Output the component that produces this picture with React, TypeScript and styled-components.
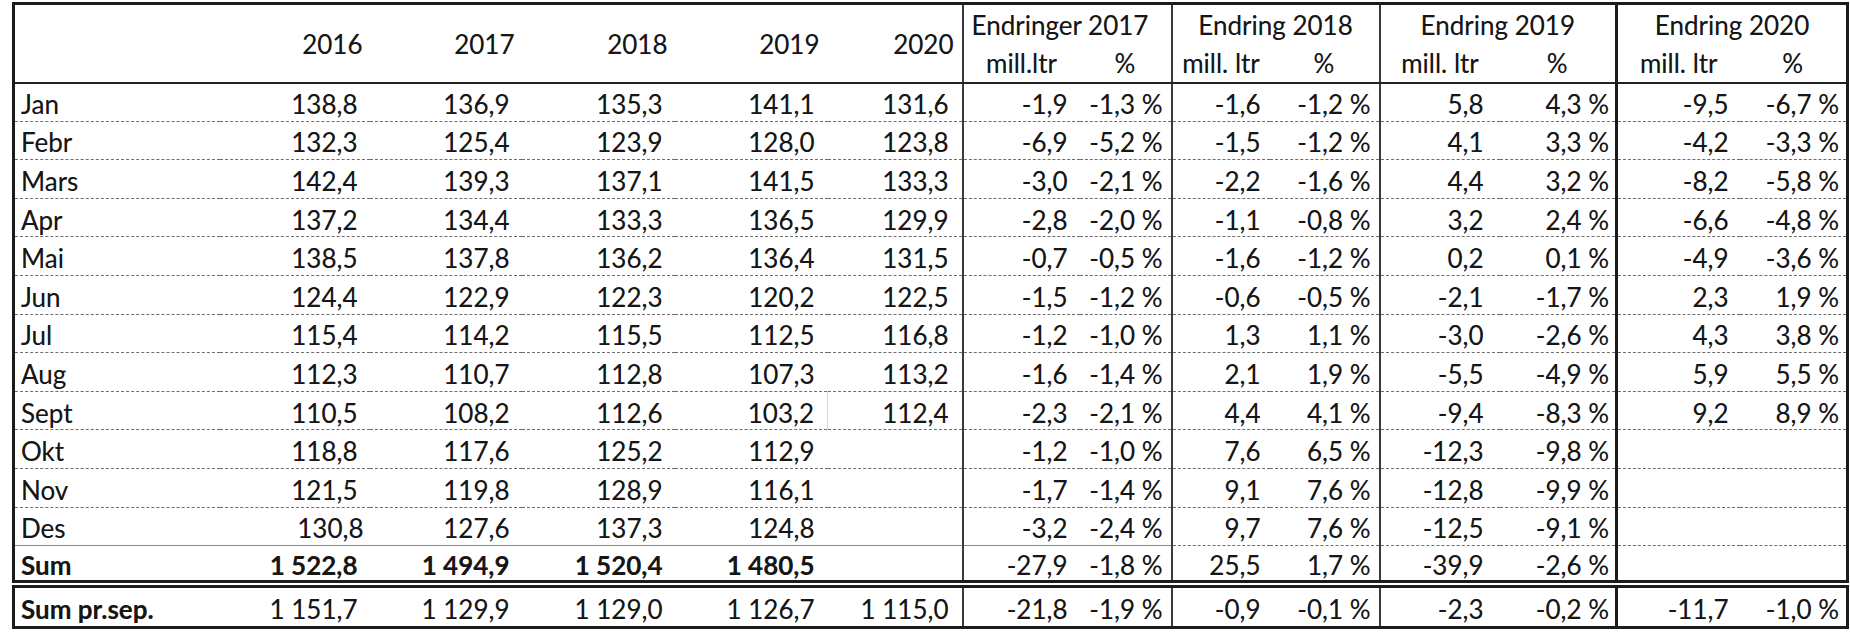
import styled, { createGlobalStyle } from "styled-components";

const GlobalStyle = createGlobalStyle`
  html, body {
    margin: 0;
    padding: 0;
    background: #ffffff;
  }
  body {
    font-family: Lato, "Open Sans", sans-serif;
    color: #161616;
  }
`;

const Sheet = styled.div`
  padding: 2px 0 0 12px;
`;

const Grid = styled.table`
  border-collapse: collapse;
  table-layout: fixed;
  width: 1836px;
  border: 3px solid #1b1b1b;
  font-size: 26px;
  line-height: 1;
  text-shadow: 0 0 0.5px rgba(0, 0, 0, 0.35);
`;

type Edge = "none" | "thin" | "thick";
type Under = "none" | "dash" | "solid" | "double" | "head";

const edgeCss = (e: Edge) =>
  e === "thin" ? "2px solid #3a3a3a" : e === "thick" ? "3px solid #1b1b1b" : "none";

const underCss = (u: Under) => {
  switch (u) {
    case "dash":
      return "1px dashed #6e6e6e";
    case "solid":
      return "1px solid #8a8a8a";
    case "double":
      return "8px double #1b1b1b";
    case "head":
      return "2px solid #222222";
    default:
      return "none";
  }
};

const Row = styled.tr<{ $h: number }>`
  height: ${(p) => p.$h}px;
`;

const HeadCell = styled.th<{ $align: string; $pr: number; $right: Edge; $under: Under }>`
  font-weight: 400;
  text-align: ${(p) => p.$align};
  padding: 2px ${(p) => p.$pr}px 0 0;
  vertical-align: middle;
  white-space: nowrap;
  border-right: ${(p) => edgeCss(p.$right)};
  border-bottom: ${(p) => underCss(p.$under)};
`;

const Cell = styled.td<{
  $pr: number;
  $bold?: boolean;
  $label?: boolean;
  $right: Edge;
  $under: Under;
  $ghost?: boolean;
}>`
  padding: 4px ${(p) => p.$pr}px 0 ${(p) => (p.$label ? 6 : 0)}px;
  text-align: ${(p) => (p.$label ? "left" : "right")};
  font-weight: ${(p) => (p.$bold ? 700 : 400)};
  vertical-align: middle;
  white-space: nowrap;
  overflow: visible;
  border-right: ${(p) => edgeCss(p.$right)};
  border-bottom: ${(p) => underCss(p.$under)};
  border-left: ${(p) => (p.$ghost ? "1px solid #d6d6d6" : "none")};
`;

const cols: { w: number; pr: number; edge: Edge }[] = [
  { w: 206, pr: 0, edge: "none" },
  { w: 150, pr: 12, edge: "none" },
  { w: 152, pr: 12, edge: "none" },
  { w: 153, pr: 12, edge: "none" },
  { w: 153, pr: 13, edge: "none" },
  { w: 135, pr: 13, edge: "thin" },
  { w: 117, pr: 12, edge: "none" },
  { w: 92, pr: 8, edge: "thin" },
  { w: 98, pr: 9, edge: "none" },
  { w: 110, pr: 8, edge: "thin" },
  { w: 120, pr: 16, edge: "none" },
  { w: 117, pr: 6, edge: "thick" },
  { w: 123, pr: 11, edge: "none" },
  { w: 108, pr: 7, edge: "none" },
];

const years = ["2016", "2017", "2018", "2019", "2020"];

const groups = [
  { title: "Endringer 2017", unit: "mill.ltr", shift: 14 },
  { title: "Endring 2018", unit: "mill. ltr", shift: 0 },
  { title: "Endring 2019", unit: "mill. ltr", shift: 0 },
  { title: "Endring 2020", unit: "mill. ltr", shift: 0 },
];

const rows: string[][] = [
  ["Jan", "138,8", "136,9", "135,3", "141,1", "131,6", "-1,9", "-1,3 %", "-1,6", "-1,2 %", "5,8", "4,3 %", "-9,5", "-6,7 %"],
  ["Febr", "132,3", "125,4", "123,9", "128,0", "123,8", "-6,9", "-5,2 %", "-1,5", "-1,2 %", "4,1", "3,3 %", "-4,2", "-3,3 %"],
  ["Mars", "142,4", "139,3", "137,1", "141,5", "133,3", "-3,0", "-2,1 %", "-2,2", "-1,6 %", "4,4", "3,2 %", "-8,2", "-5,8 %"],
  ["Apr", "137,2", "134,4", "133,3", "136,5", "129,9", "-2,8", "-2,0 %", "-1,1", "-0,8 %", "3,2", "2,4 %", "-6,6", "-4,8 %"],
  ["Mai", "138,5", "137,8", "136,2", "136,4", "131,5", "-0,7", "-0,5 %", "-1,6", "-1,2 %", "0,2", "0,1 %", "-4,9", "-3,6 %"],
  ["Jun", "124,4", "122,9", "122,3", "120,2", "122,5", "-1,5", "-1,2 %", "-0,6", "-0,5 %", "-2,1", "-1,7 %", "2,3", "1,9 %"],
  ["Jul", "115,4", "114,2", "115,5", "112,5", "116,8", "-1,2", "-1,0 %", "1,3", "1,1 %", "-3,0", "-2,6 %", "4,3", "3,8 %"],
  ["Aug", "112,3", "110,7", "112,8", "107,3", "113,2", "-1,6", "-1,4 %", "2,1", "1,9 %", "-5,5", "-4,9 %", "5,9", "5,5 %"],
  ["Sept", "110,5", "108,2", "112,6", "103,2", "112,4", "-2,3", "-2,1 %", "4,4", "4,1 %", "-9,4", "-8,3 %", "9,2", "8,9 %"],
  ["Okt", "118,8", "117,6", "125,2", "112,9", "", "-1,2", "-1,0 %", "7,6", "6,5 %", "-12,3", "-9,8 %", "", ""],
  ["Nov", "121,5", "119,8", "128,9", "116,1", "", "-1,7", "-1,4 %", "9,1", "7,6 %", "-12,8", "-9,9 %", "", ""],
  ["Des", "130,8", "127,6", "137,3", "124,8", "", "-3,2", "-2,4 %", "9,7", "7,6 %", "-12,5", "-9,1 %", "", ""],
  ["Sum", "1 522,8", "1 494,9", "1 520,4", "1 480,5", "", "-27,9", "-1,8 %", "25,5", "1,7 %", "-39,9", "-2,6 %", "", ""],
  ["Sum pr.sep.", "1 151,7", "1 129,9", "1 129,0", "1 126,7", "1 115,0", "-21,8", "-1,9 %", "-0,9", "-0,1 %", "-2,3", "-0,2 %", "-11,7", "-1,0 %"],
];

const nb = (s: string) => s.replace(/ /g, "\u00a0");

const underFor = (r: number, c: number): Under => {
  const label = rows[r][0];
  if (label === "Sum pr.sep.") return "none";
  if (label === "Sum") return "double";
  if (label === "Des") return c <= 7 ? "solid" : "dash";
  return "dash";
};

const boldFor = (r: number, c: number) => {
  const label = rows[r][0];
  if (c === 0) return label === "Sum" || label === "Sum pr.sep.";
  return label === "Sum" && c <= 4;
};

export default function App() {
  return (
    <>
      <GlobalStyle />
      <Sheet>
        <Grid>
          <colgroup>
            {cols.map((c, i) => (
              <col key={i} style={{ width: c.w }} />
            ))}
          </colgroup>
          <thead>
            <Row $h={39}>
              <HeadCell rowSpan={2} $align="left" $pr={0} $right="none" $under="head" />
              {years.map((y, i) => (
                <HeadCell
                  key={y}
                  rowSpan={2}
                  $align="right"
                  $pr={cols[i + 1].pr - 5}
                  $right={cols[i + 1].edge}
                  $under="head"
                >
                  {y}
                </HeadCell>
              ))}
              {groups.map((g, i) => (
                <HeadCell
                  key={g.title}
                  colSpan={2}
                  $align="center"
                  $pr={g.shift}
                  $right={cols[7 + i * 2].edge}
                  $under="none"
                >
                  {g.title}
                </HeadCell>
              ))}
            </Row>
            <Row $h={40}>
              {groups.map((g, i) => [
                <HeadCell key={g.title + "u"} $align="center" $pr={0} $right="none" $under="head">
                  {nb(g.unit)}
                </HeadCell>,
                <HeadCell
                  key={g.title + "p"}
                  $align="center"
                  $pr={0}
                  $right={cols[7 + i * 2].edge}
                  $under="head"
                >
                  %
                </HeadCell>,
              ])}
            </Row>
          </thead>
          <tbody>
            {rows.map((row, r) => (
              <Row key={row[0]} $h={r === rows.length - 1 ? 43 : 38.6}>
                {row.map((v, c) => (
                  <Cell
                    key={c}
                    $label={c === 0}
                    $pr={row[0] === "Des" && c === 1 ? cols[c].pr - 6 : cols[c].pr}
                    $bold={boldFor(r, c)}
                    $right={cols[c].edge}
                    $under={underFor(r, c)}
                    $ghost={row[0] === "Sept" && c === 5}
                  >
                    {nb(v)}
                  </Cell>
                ))}
              </Row>
            ))}
          </tbody>
        </Grid>
      </Sheet>
    </>
  );
}
